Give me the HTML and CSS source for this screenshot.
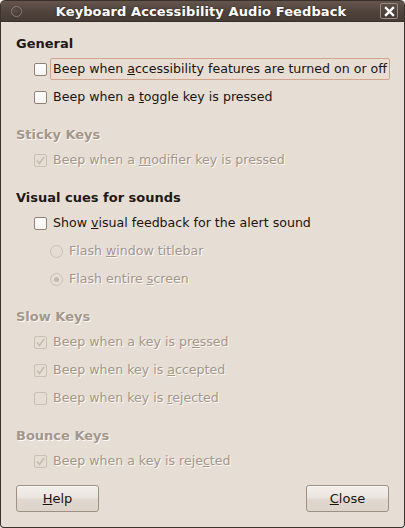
FILE: index.html
```html
<!DOCTYPE html>
<html>
<head>
<meta charset="utf-8">
<title>Keyboard Accessibility Audio Feedback</title>
<link rel="stylesheet" href="styles.css">
</head>
<body>
<div class="window">
  <div class="titlebar">
    <span class="menu-btn"></span>
    <span class="title">Keyboard Accessibility Audio Feedback</span>
    <span class="close-btn">
      <svg width="11" height="11" viewBox="0 0 11 11"><path d="M2 2 L9 9 M9 2 L2 9" stroke="#fff" stroke-width="2.4" stroke-linecap="square"/></svg>
    </span>
  </div>
  <div class="content">
    <section class="group">
      <h2 class="heading">General</h2>
      <div class="row">
        <span class="check"></span>
        <span class="label focus">Beep when <u>a</u>ccessibility features are turned on or off</span>
      </div>
      <div class="row">
        <span class="check"></span>
        <span class="label">Beep when a <u>t</u>oggle key is pressed</span>
      </div>
    </section>
    <section class="group disabled">
      <h2 class="heading">Sticky Keys</h2>
      <div class="row">
        <span class="check checked"><svg width="11" height="11" viewBox="0 0 11 11"><path d="M2 5.5 L4.5 8.5 L9 2" fill="none" stroke="#c6b9ad" stroke-width="1.6"/></svg></span>
        <span class="label">Beep when a <u>m</u>odifier key is pressed</span>
      </div>
    </section>
    <section class="group">
      <h2 class="heading">Visual cues for sounds</h2>
      <div class="row">
        <span class="check"></span>
        <span class="label">Show <u>v</u>isual feedback for the alert sound</span>
      </div>
      <div class="row sub disabled">
        <span class="radio"></span>
        <span class="label">Flash <u>w</u>indow titlebar</span>
      </div>
      <div class="row sub disabled">
        <span class="radio on"><span class="dot"></span></span>
        <span class="label">Flash entire <u>s</u>creen</span>
      </div>
    </section>
    <section class="group disabled">
      <h2 class="heading">Slow Keys</h2>
      <div class="row">
        <span class="check checked"><svg width="11" height="11" viewBox="0 0 11 11"><path d="M2 5.5 L4.5 8.5 L9 2" fill="none" stroke="#c6b9ad" stroke-width="1.6"/></svg></span>
        <span class="label">Beep when a key is pr<u>e</u>ssed</span>
      </div>
      <div class="row">
        <span class="check checked"><svg width="11" height="11" viewBox="0 0 11 11"><path d="M2 5.5 L4.5 8.5 L9 2" fill="none" stroke="#c6b9ad" stroke-width="1.6"/></svg></span>
        <span class="label">Beep when key is <u>a</u>ccepted</span>
      </div>
      <div class="row">
        <span class="check"></span>
        <span class="label">Beep when key is <u>r</u>ejected</span>
      </div>
    </section>
    <section class="group disabled">
      <h2 class="heading">Bounce Keys</h2>
      <div class="row">
        <span class="check checked"><svg width="11" height="11" viewBox="0 0 11 11"><path d="M2 5.5 L4.5 8.5 L9 2" fill="none" stroke="#c6b9ad" stroke-width="1.6"/></svg></span>
        <span class="label">Beep when a key is reje<u>c</u>ted</span>
      </div>
    </section>
  </div>
  <div class="buttons">
    <button class="btn"><u>H</u>elp</button>
    <button class="btn"><u>C</u>lose</button>
  </div>
</div>
</body>
</html>
```
FILE: styles.css
```css
html, body {
  margin: 0;
  padding: 0;
  background: #f4f1ee;
}
body {
  font-family: "DejaVu Sans", "Liberation Sans", sans-serif;
  font-size: 13px;
  color: #1a1511;
}
.window {
  width: 405px;
  height: 528px;
  box-sizing: border-box;
  background: #e6ded5;
  border: 1px solid #3b332e;
  border-top: none;
  border-radius: 5px 5px 4px 4px;
  display: flex;
  flex-direction: column;
  overflow: hidden;
}
.titlebar {
  height: 22px;
  flex: 0 0 22px;
  box-sizing: border-box;
  background: linear-gradient(#65564d, #4f433c 55%, #463b35);
  border: 1px solid #3a302b;
  display: flex;
  align-items: center;
  margin: 0 -1px;
  border-radius: 5px 5px 0 0;
}
.menu-btn {
  width: 9px;
  height: 9px;
  border-radius: 50%;
  border: 1px solid #8c7e75;
  background: radial-gradient(circle at 40% 35%, #5d5049, #3e342f);
  margin-left: 10px;
}
.title {
  flex: 1;
  text-align: center;
  color: #fff;
  font-weight: bold;
  font-size: 13px;
  text-shadow: 0 0 2px #2a221e;
  letter-spacing: 0.1px;
}
.close-btn {
  width: 18px;
  height: 16px;
  box-sizing: border-box;
  border: 1px solid #9b8c82;
  border-radius: 2px;
  background: linear-gradient(#5d4f47, #453a34);
  display: flex;
  align-items: center;
  justify-content: center;
  margin-right: 6px;
}
.content {
  padding: 13px 15px 0 15px;
  flex: 1;
}
.group + .group {
  margin-top: 15px;
}
.heading {
  margin: 0 0 2px 0;
  font-size: 13px;
  font-weight: bold;
  line-height: 18px;
  color: #1f1915;
}
.row {
  height: 28px;
  display: flex;
  align-items: center;
  padding-left: 18px;
}
.row.sub {
  padding-left: 34px;
}
.check {
  width: 13px;
  height: 13px;
  box-sizing: border-box;
  border: 1px solid #8f8174;
  border-radius: 2px;
  background: linear-gradient(#ffffff, #f6f3f0);
  margin-right: 4px;
  display: flex;
  align-items: center;
  justify-content: center;
  flex: 0 0 13px;
}
.radio {
  width: 13px;
  height: 13px;
  box-sizing: border-box;
  border: 1px solid #cbbfb4;
  border-radius: 50%;
  margin-right: 4px;
  display: flex;
  align-items: center;
  justify-content: center;
  flex: 0 0 13px;
}
.radio .dot {
  width: 5px;
  height: 5px;
  border-radius: 50%;
  background: #c6b9ad;
}
.label {
  font-size: 12.6px;
  line-height: 18px;
  padding: 1px 2px;
  border: 1px solid transparent;
  border-radius: 2px;
  margin-left: -1px;
  white-space: nowrap;
}
.label.focus {
  border-color: #d3a58f;
  background: #e8ddd3;
}
.disabled .heading,
.disabled .label {
  color: #a5968a;
  text-shadow: 1px 1px 0 #fbf9f7;
}
.disabled .check {
  border-color: #cbbfb4;
  background: #e6ded5;
}
.disabled u {
  text-decoration-color: #a5968a;
}
.buttons {
  display: flex;
  justify-content: space-between;
  padding: 0 15px 15px 15px;
}
.btn {
  width: 83px;
  height: 27px;
  font-family: "DejaVu Sans", "Liberation Sans", sans-serif;
  font-size: 13px;
  color: #1a1511;
  border: 1px solid #9e9184;
  border-radius: 3px;
  background: linear-gradient(#f3efeb, #ece6e0 45%, #e0d8cf 55%, #ddd4cb);
  box-shadow: inset 0 1px 0 #faf8f6;
  padding: 0;
}
```
